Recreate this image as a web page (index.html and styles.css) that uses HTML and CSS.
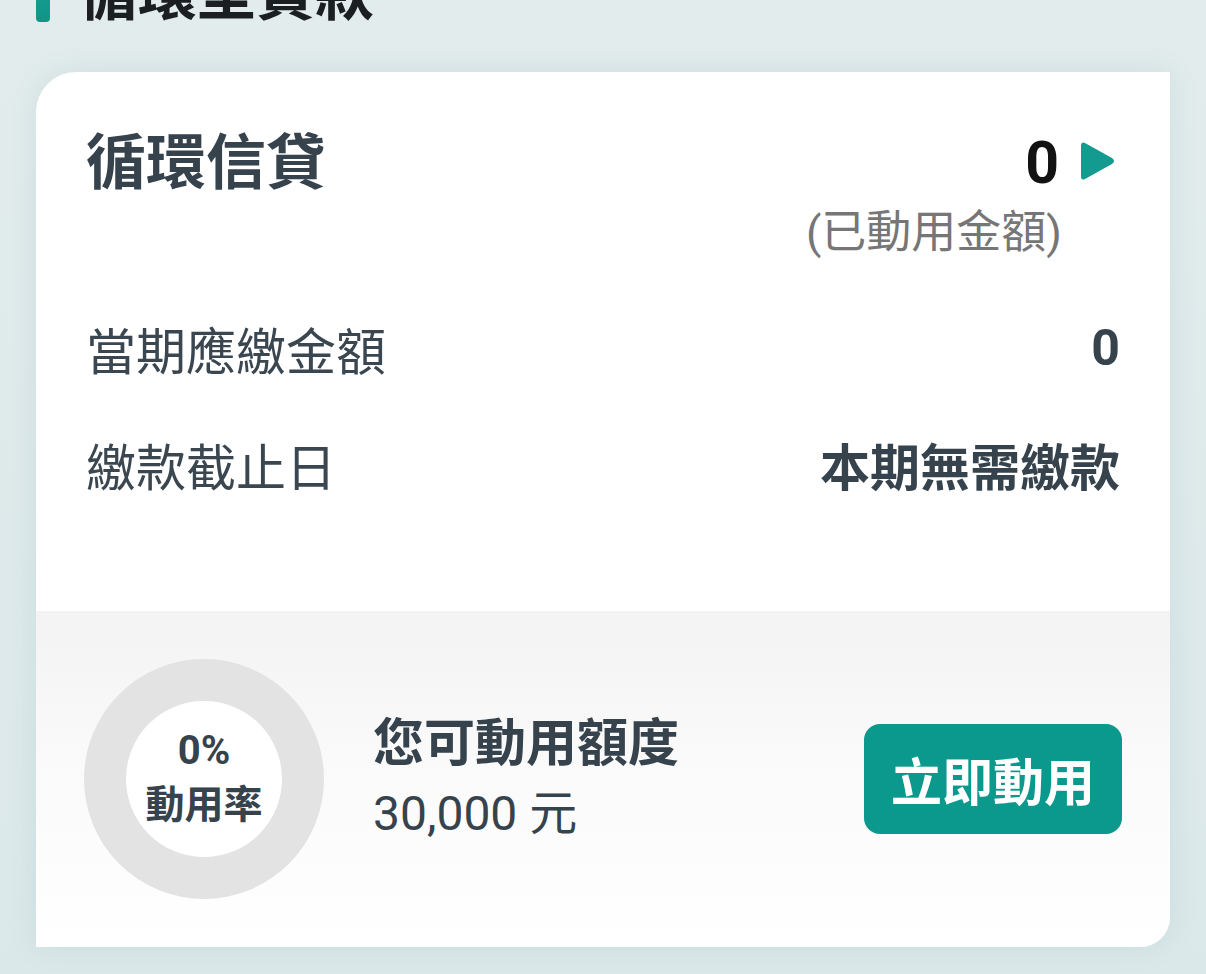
FILE: index.html
```html
<!DOCTYPE html>
<html lang="zh-Hant">
<head>
<meta charset="utf-8">
<title>循環型貸款</title>
<link rel="stylesheet" href="styles.css">
</head>
<body>
<main class="page">
  <h2 class="section-title"><span class="title-bar"></span>循環型貸款</h2>
  <section class="card">
    <div class="card-main">
      <div class="summary">
        <h3 class="product">循環信貸</h3>
        <div class="used">
          <div class="used-amount">0
            <svg class="play" width="34" height="40" viewBox="0 0 34 40"><path d="M4 2 Q0 0 0 5 V35 Q0 40 4 38 L31 23 Q35 20 31 17 Z" fill="#149b8f"/></svg>
          </div>
          <div class="used-label">(已動用金額)</div>
        </div>
      </div>
      <div class="row row-first"><span class="row-label">當期應繳金額</span><span class="row-value">0</span></div>
      <div class="row"><span class="row-label">繳款截止日</span><span class="row-value">本期無需繳款</span></div>
    </div>
    <div class="card-foot">
      <div class="donut">
        <div class="donut-inner">
          <span class="donut-pct">0%</span>
          <span class="donut-label">動用率</span>
        </div>
      </div>
      <div class="avail">
        <div class="avail-title">您可動用額度</div>
        <div class="avail-amount">30,000 元</div>
      </div>
      <button class="use-btn" type="button">立即動用</button>
    </div>
  </section>
</main>
</body>
</html>
```

FILE: styles.css
```css
html, body {
  margin: 0;
  padding: 0;
}
body {
  background: linear-gradient(180deg, #e2ecec 0%, #dbe8e9 100%);
  font-family: Roboto, "Noto Sans CJK TC", sans-serif;
  color: #36434d;
  height: 974px;
  overflow: hidden;
}
.page {
  padding: 0 36px;
}
.section-title {
  display: flex;
  align-items: flex-end;
  margin: -42px 0 0 0;
  height: 74px;
  font-size: 59px;
  line-height: 74px;
  font-weight: 700;
  color: #1b1f22;
}
.title-bar {
  display: block;
  width: 14px;
  height: 60px;
  margin: 0 29px 10px 0;
  background: linear-gradient(180deg, #1aa79a, #109486);
  border-radius: 0 0 4px 4px;
}
.card {
  margin-top: 40px;
  background: #fff;
  border-radius: 40px 0 30px 0;
  overflow: hidden;
  box-shadow: 0 0 28px rgba(70, 130, 140, 0.12);
}
.card-main {
  box-sizing: border-box;
  height: 539px;
  padding: 52px 50px 0 50px;
}
.summary {
  display: flex;
  justify-content: space-between;
  align-items: flex-start;
}
.product {
  margin: 0;
  font-size: 60px;
  line-height: 80px;
  font-weight: 700;
  color: #36434d;
}
.used {
  display: flex;
  flex-direction: column;
  align-items: flex-end;
}
.used-amount {
  display: flex;
  align-items: center;
  gap: 22px;
  font-size: 59px;
  line-height: 78px;
  font-weight: 700;
  color: #121212;
  margin-right: 5px;
}
.play {
  display: block;
  margin-top: -4px;
}
.used-label {
  margin-right: 58px;
  font-size: 45px;
  line-height: 62px;
  color: #767676;
}
.row {
  display: flex;
  justify-content: space-between;
  align-items: center;
  height: 116px;
  font-size: 50px;
}
.row-first {
  margin-top: 26px;
}
.row-label {
  color: #3b4750;
}
.row-value {
  font-weight: 700;
  color: #36434d;
}
.card-foot {
  box-sizing: border-box;
  height: 336px;
  display: flex;
  align-items: center;
  padding: 0 48px;
  background: linear-gradient(180deg, #f3f3f3 0%, #fafafa 45%, #ffffff 100%);
}
.donut {
  box-sizing: border-box;
  width: 240px;
  height: 240px;
  border-radius: 50%;
  border: 42px solid #e3e3e3;
  background: #fff;
  flex: none;
}
.donut-inner {
  height: 100%;
  display: flex;
  flex-direction: column;
  align-items: center;
  justify-content: center;
  font-weight: 700;
  color: #36434d;
}
.donut-pct {
  font-size: 40px;
  line-height: 52px;
}
.donut-label {
  font-size: 39px;
  line-height: 56px;
}
.avail {
  margin-left: 49px;
  flex: 1;
}
.avail-title {
  font-size: 51px;
  line-height: 70px;
  font-weight: 700;
  color: #36434d;
}
.avail-amount {
  font-size: 48px;
  line-height: 70px;
  color: #36434d;
}
.use-btn {
  width: 258px;
  height: 110px;
  border: none;
  border-radius: 16px;
  background: #0a998c;
  color: #fff;
  font-family: inherit;
  font-size: 51px;
  font-weight: 700;
  padding: 0;
}
```
